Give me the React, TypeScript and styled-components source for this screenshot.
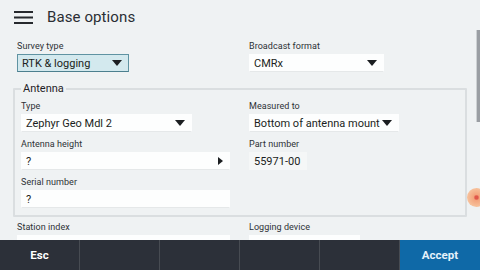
import React from "react";
import styled, { createGlobalStyle } from "styled-components";

const GlobalStyle = createGlobalStyle`
  html, body { margin: 0; padding: 0; }
  body {
    background: #eff2f3;
    font-family: Roboto, "Noto Sans", "Liberation Sans", sans-serif;
    color: #1f2226;
  }
`;

const Screen = styled.div`
  position: relative;
  width: 480px;
  height: 270px;
  display: flex;
  flex-direction: column;
  overflow: hidden;
  background: #eff2f3;
`;

const Header = styled.header`
  height: 34px;
  flex: none;
  display: flex;
  align-items: center;
  padding-left: 14px;
  gap: 14px;
`;

const Title = styled.h1`
  margin: 0;
  font-size: 15px;
  font-weight: 400;
  color: #2a2e33;
  letter-spacing: 0.1px;
  line-height: 18px;
`;

const Main = styled.main`
  flex: 1;
  overflow: hidden;
  padding: 6px 0 0 17px;
`;

const Row = styled.div`
  display: grid;
  grid-template-columns: 232px 1fr;
  margin-bottom: 6px;
`;

const Field = styled.div`
  display: flex;
  flex-direction: column;
  align-items: flex-start;
  gap: 2px;
`;

const Label = styled.label`
  font-size: 9px;
  line-height: 12px;
  color: #2d3135;
  letter-spacing: 0.05px;
`;

const Control = styled.div<{ $w: number; $selected?: boolean; $plain?: boolean }>`
  box-sizing: border-box;
  width: ${(p) => p.$w}px;
  height: 18px;
  display: flex;
  align-items: center;
  justify-content: space-between;
  padding: 0 6px 0 4px;
  font-size: 11px;
  color: #1b1e21;
  background: ${(p) => (p.$selected ? "#d3e9ee" : p.$plain ? "#f5f7f7" : "#fdfefe")};
  border: 1px solid ${(p) => (p.$selected ? "#5f93a2" : "transparent")};
  border-bottom-color: ${(p) => (p.$selected ? "#4c7f8e" : p.$plain ? "transparent" : "#e5e8e9")};
  white-space: nowrap;
`;

const Group = styled.fieldset`
  box-sizing: border-box;
  width: 454px;
  margin: 10px 0 0 -4px;
  padding: 5px 0 7px 6px;
  border: 2px solid #dadee0;
  border-radius: 1px;
`;

const Legend = styled.legend`
  padding: 0 2px;
  font-size: 11px;
  line-height: 13px;
  color: #1f2226;
`;

const GroupRow = styled.div`
  display: grid;
  grid-template-columns: 228px 1fr;
  margin-bottom: 6px;
  &:last-child { margin-bottom: 0; }
`;

const After = styled.div`
  margin-top: 4px;
`;

const BottomBar = styled.nav`
  height: 30px;
  flex: none;
  display: grid;
  grid-template-columns: repeat(6, 1fr);
  background: #2c3039;
`;

const BarButton = styled.button<{ $primary?: boolean }>`
  border: none;
  margin: 0;
  padding: 0;
  height: 30px;
  font-family: Roboto, "Liberation Sans", sans-serif;
  font-size: 11.5px;
  font-weight: 700;
  color: ${(p) => (p.$primary ? "#e4f2fb" : "#ffffff")};
  background: ${(p) => (p.$primary ? "#0f69a7" : "#2c3039")};
  border-right: ${(p) => (p.$primary ? "none" : "1px solid #474b52")};
`;

const ScrollThumb = styled.div`
  position: absolute;
  right: 0;
  top: 30px;
  width: 3px;
  height: 92px;
  background: #9a9ea3;
  border-left: 1px solid #cdd1d3;
`;

const TouchDot = styled.div`
  position: absolute;
  left: 467px;
  top: 188px;
  width: 19px;
  height: 19px;
  border-radius: 50%;
  background: radial-gradient(circle, #e0574a 0 1.5px, #f3a57e 3px, #f7c29c 70%, rgba(247, 200, 160, 0.6) 100%);
`;

const Caret = () => (
  <svg width="10" height="6" viewBox="0 0 10 6">
    <path d="M0 0 H10 L5 6 Z" fill="#1b1e21" />
  </svg>
);

const RightCaret = () => (
  <svg width="5" height="8" viewBox="0 0 5 8">
    <path d="M0 0 L5 4 L0 8 Z" fill="#1b1e21" />
  </svg>
);

const Hamburger = () => (
  <svg width="19" height="13" viewBox="0 0 19 13">
    <rect x="0" y="0" width="19" height="2" fill="#26292d" />
    <rect x="0" y="5.5" width="19" height="2" fill="#26292d" />
    <rect x="0" y="11" width="19" height="2" fill="#26292d" />
  </svg>
);

export default function App() {
  return (
    <>
      <GlobalStyle />
      <Screen>
        <Header>
          <Hamburger />
          <Title>Base options</Title>
        </Header>
        <Main>
          <Row>
            <Field>
              <Label>Survey type</Label>
              <Control $w={112} $selected>
                RTK &amp; logging
                <Caret />
              </Control>
            </Field>
            <Field>
              <Label>Broadcast format</Label>
              <Control $w={135}>
                CMRx
                <Caret />
              </Control>
            </Field>
          </Row>
          <Group>
            <Legend>Antenna</Legend>
            <GroupRow>
              <Field>
                <Label>Type</Label>
                <Control $w={171}>
                  Zephyr Geo Mdl 2
                  <Caret />
                </Control>
              </Field>
              <Field>
                <Label>Measured to</Label>
                <Control $w={150}>
                  Bottom of antenna mount
                  <Caret />
                </Control>
              </Field>
            </GroupRow>
            <GroupRow>
              <Field>
                <Label>Antenna height</Label>
                <Control $w={209}>
                  ?
                  <RightCaret />
                </Control>
              </Field>
              <Field>
                <Label>Part number</Label>
                <Control $w={58} $plain>
                  55971-00
                </Control>
              </Field>
            </GroupRow>
            <GroupRow>
              <Field>
                <Label>Serial number</Label>
                <Control $w={209}>?</Control>
              </Field>
            </GroupRow>
          </Group>
          <After>
            <Row>
              <Field>
                <Label>Station index</Label>
                <Control $w={213} />
              </Field>
              <Field>
                <Label>Logging device</Label>
                <Control $w={111} />
              </Field>
            </Row>
          </After>
        </Main>
        <BottomBar>
          <BarButton>Esc</BarButton>
          <BarButton />
          <BarButton />
          <BarButton />
          <BarButton />
          <BarButton $primary>Accept</BarButton>
        </BottomBar>
        <ScrollThumb />
        <TouchDot />
      </Screen>
    </>
  );
}
